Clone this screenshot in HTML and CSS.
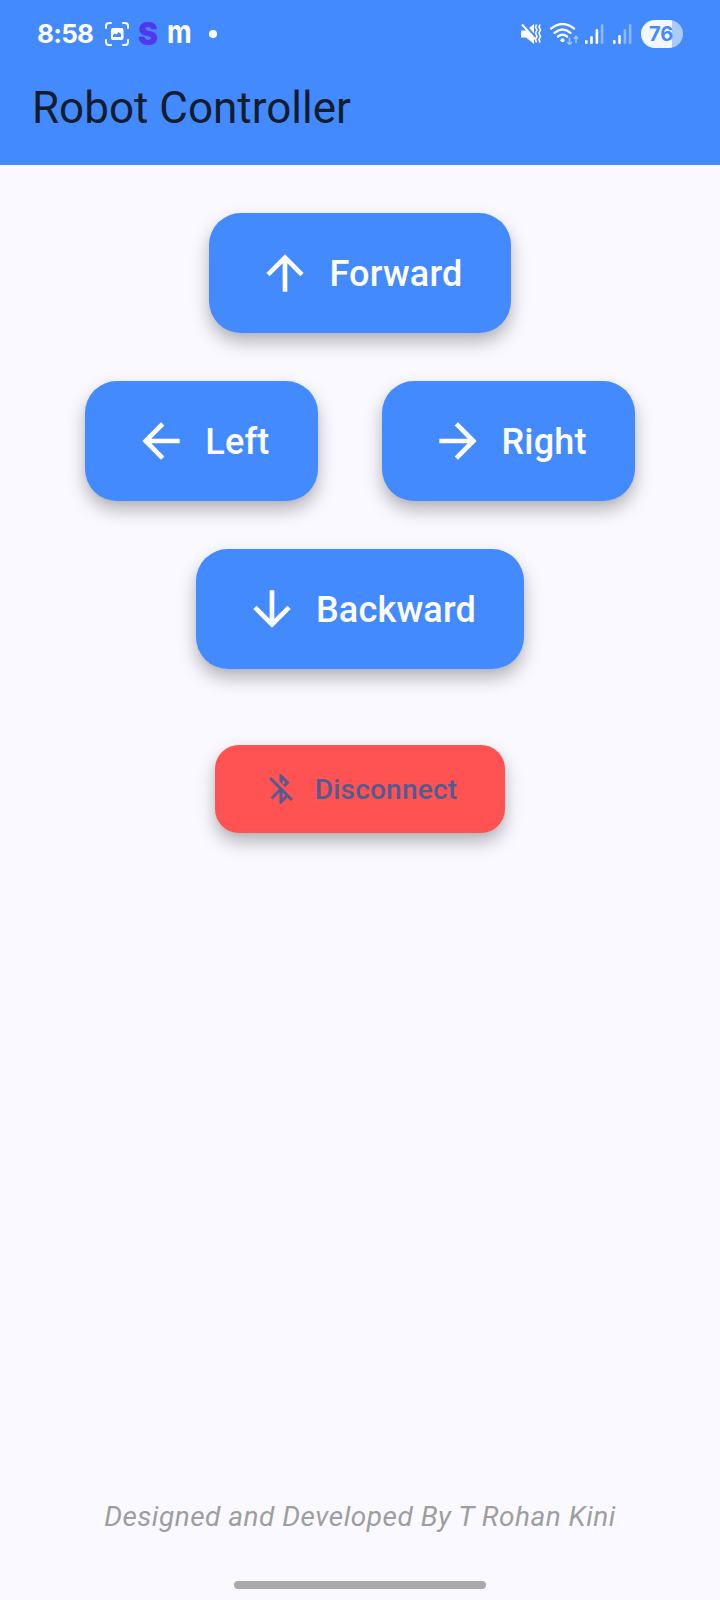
FILE: index.html
```html
<!DOCTYPE html>
<html lang="en">
<head>
<meta charset="utf-8">
<title>Robot Controller</title>
<link rel="stylesheet" href="styles.css">
</head>
<body>
<div class="screen">
  <header class="header">
    <div class="status">
      <div class="status-left">
        <span class="time">8:58</span>
        <svg class="shot" width="24" height="24" viewBox="0 0 24 24"><g fill="none" stroke="#fff" stroke-width="2" stroke-linecap="round"><path d="M1 6V4a3 3 0 0 1 3-3h2M18 1h2a3 3 0 0 1 3 3v2M23 18v2a3 3 0 0 1-3 3h-2M6 23H4a3 3 0 0 1-3-3v-2"/></g><rect x="6" y="6" width="12.500" height="12" rx="2" fill="#fff"/><path d="M8 15v-2l2-1.500 1.500 1 2-2.500 2.500 2v3z" fill="#448aff"/></svg>
        <span class="app-s">S</span>
        <span class="app-m">m</span>
        <span class="dot"></span>
      </div>
      <div class="status-right">
        <svg class="mute" width="21" height="20" viewBox="0 0 21 20"><path d="M0 6.500h5L13 0v20l-8-6.500H0z" fill="#fff"/><path d="M0-3l16 18" stroke="#448aff" stroke-width="3"/><path d="M1 .5L14 15" stroke="#fff" stroke-width="2"/><path d="M15.500 .5l-1 2.500 1.500 3-1.500 3 1.500 3.500-1.500 3 1 3M19 .5l-1 2.500 1.500 3-1.500 3 1.500 3.500-1.500 3 1 3" fill="none" stroke="#fff" stroke-width="1.600"/></svg>
        <svg class="wifi" width="29" height="22" viewBox="0 0 29 22"><g fill="none" stroke="#fff" stroke-width="2.300" stroke-linecap="round"><path d="M1.200 5.500Q12.500-3.500 24 5.500M4.500 9.800q8-6.500 16 0M8 13.500q4.500-3.500 9 0"/></g><circle cx="12.500" cy="17.300" r="2" fill="#fff"/><path d="M19.500 14.500v7m-2.500-2.500l2.500 2.500 2.500-2.500M26 20v-6.500m-2.200 2.200L26 13.500l2.200 2.200" fill="none" stroke="#9cc2ff" stroke-width="1.600"/></svg>
        <svg class="sig1" width="19" height="20" viewBox="0 0 19 20"><g fill="#fff"><rect y="16" width="2.600" height="4" rx="1.300"/><rect x="5.200" y="12" width="2.600" height="8" rx="1.300"/><rect x="10.600" y="5" width="2.600" height="15" rx="1.300"/><rect x="15.800" y="0" width="2.600" height="20" rx="1.300" opacity=".4"/></g></svg>
        <svg class="sig2" width="19" height="20" viewBox="0 0 19 20"><g fill="#fff"><rect y="16" width="2.600" height="4" rx="1.300"/><rect x="5.200" y="11" width="2.600" height="9" rx="1.300"/><rect x="10.600" y="5" width="2.600" height="15" rx="1.300" opacity=".4"/><rect x="15.800" y="0" width="2.600" height="20" rx="1.300" opacity=".4"/></g></svg>
        <span class="battery">76</span>
      </div>
    </div>
    <h1 class="title">Robot Controller</h1>
  </header>

  <main class="pad">
    <button class="btn"><svg class="icon" viewBox="0 0 24 24"><path d="M4 12l1.410 1.410L11 7.830V20h2V7.830l5.580 5.590L20 12l-8-8-8 8z"/></svg><span class="label">Forward</span></button>
    <div class="row">
      <button class="btn"><svg class="icon" viewBox="0 0 24 24"><path d="M20 11H7.830l5.590-5.590L12 4l-8 8 8 8 1.410-1.410L7.830 13H20v-2z"/></svg><span class="label">Left</span></button>
      <button class="btn"><svg class="icon" viewBox="0 0 24 24"><path d="M12 4l-1.410 1.410L16.170 11H4v2h12.170l-5.580 5.590L12 20l8-8z"/></svg><span class="label">Right</span></button>
    </div>
    <button class="btn"><svg class="icon" viewBox="0 0 24 24"><path d="M20 12l-1.410-1.410L13 16.170V4h-2v12.170l-5.580-5.590L4 12l8 8 8-8z"/></svg><span class="label">Backward</span></button>
    <button class="btn btn-danger"><svg class="icon" viewBox="0 0 24 24"><path d="M13 5.830l1.880 1.880-1.600 1.600 1.410 1.410 3.020-3.020L12 2h-1v5.030l2 2v-3.200zM5.410 4L4 5.410 10.590 12 5 17.590 6.410 19 11 14.410V22h1l4.290-4.290 2.300 2.290L20 18.590 5.410 4zM13 18.170v-3.760l1.880 1.880L13 18.170z"/></svg><span>Disconnect</span></button>
  </main>

  <footer class="footer">
    <p class="credit">Designed and Developed By T Rohan Kini</p>
    <div class="home-bar"></div>
  </footer>
</div>
</body>
</html>
```
FILE: styles.css
```css
* { box-sizing: border-box; }
body { margin: 0; font-family: Roboto, sans-serif; }
.screen {
  width: 720px;
  height: 1600px;
  display: flex;
  flex-direction: column;
  background: #faf9ff;
  overflow: hidden;
}
.header { height: 165px; background: #448aff; flex: none; }
.status {
  height: 53px;
  padding: 15px 37px 0;
  display: flex;
  justify-content: space-between;
}
.status-left, .status-right { display: flex; align-items: center; height: 38px; }
.time {
  width: 57px;
  font: 700 26px/38px Inter, sans-serif;
  letter-spacing: -.7px;
  color: #fff;
  white-space: nowrap;
}
.shot { margin-left: 11px; }
.app-s {
  width: 20px;
  margin-left: 9px;
  font: 900 31px/38px Inter, sans-serif;
  color: #5038ec;
  transform: scaleX(.97);
  transform-origin: left;
}
.app-m {
  width: 24px;
  margin-left: 9px;
  font: 700 33px/30px Inter, sans-serif;
  color: #fff;
  transform: translateY(-3px) scaleX(.82);
  transform-origin: left;
}
.dot { width: 8px; height: 8px; margin-left: 18px; border-radius: 50%; background: #fff; }
.wifi { margin-left: 8px; }
.sig1 { margin-left: 6px; }
.sig2 { margin-left: 9px; }
.battery {
  width: 42px;
  height: 28px;
  margin-left: 9px;
  padding-left: 8px;
  border-radius: 14px;
  background: linear-gradient(90deg, #f3f7ff 31px, #abcbff 31px);
  color: #448aff;
  font: 700 20px/28px Inter, sans-serif;
}
.title {
  margin: 0;
  padding-left: 32px;
  font-size: 44px;
  line-height: 111px;
  font-weight: 400;
  color: #141d2e;
}
.pad {
  flex: 1;
  padding-top: 48px;
  display: flex;
  flex-direction: column;
  align-items: center;
  gap: 48px;
}
.row { display: flex; gap: 64px; }
.btn {
  height: 120px;
  padding: 0 48px;
  display: flex;
  align-items: center;
  gap: 16px;
  border: 0;
  border-radius: 32px;
  background: #448aff;
  color: #fff;
  font: 500 36px Roboto, sans-serif;
  letter-spacing: .2px;
  box-shadow: 0 9px 18px rgba(0, 0, 0, .28), 0 2px 5px rgba(0, 0, 0, .04);
}
.icon { width: 56px; height: 56px; fill: currentColor; }
.label { padding-top: 1px; }
.btn-danger {
  height: 88px;
  margin-top: 28px;
  border-radius: 24px;
  background: #ff5252;
  color: #535b91;
  font-size: 28px;
}
.btn-danger .icon { width: 36px; height: 36px; }
.footer { display: flex; flex-direction: column; align-items: center; }
.credit {
  margin: 0 0 44px;
  font-size: 28px;
  line-height: 40px;
  font-style: italic;
  letter-spacing: .5px;
  color: #9e9e9e;
}
.home-bar { width: 252px; height: 8px; margin-bottom: 11px; border-radius: 4px; background: #aaa9b0; }
```
